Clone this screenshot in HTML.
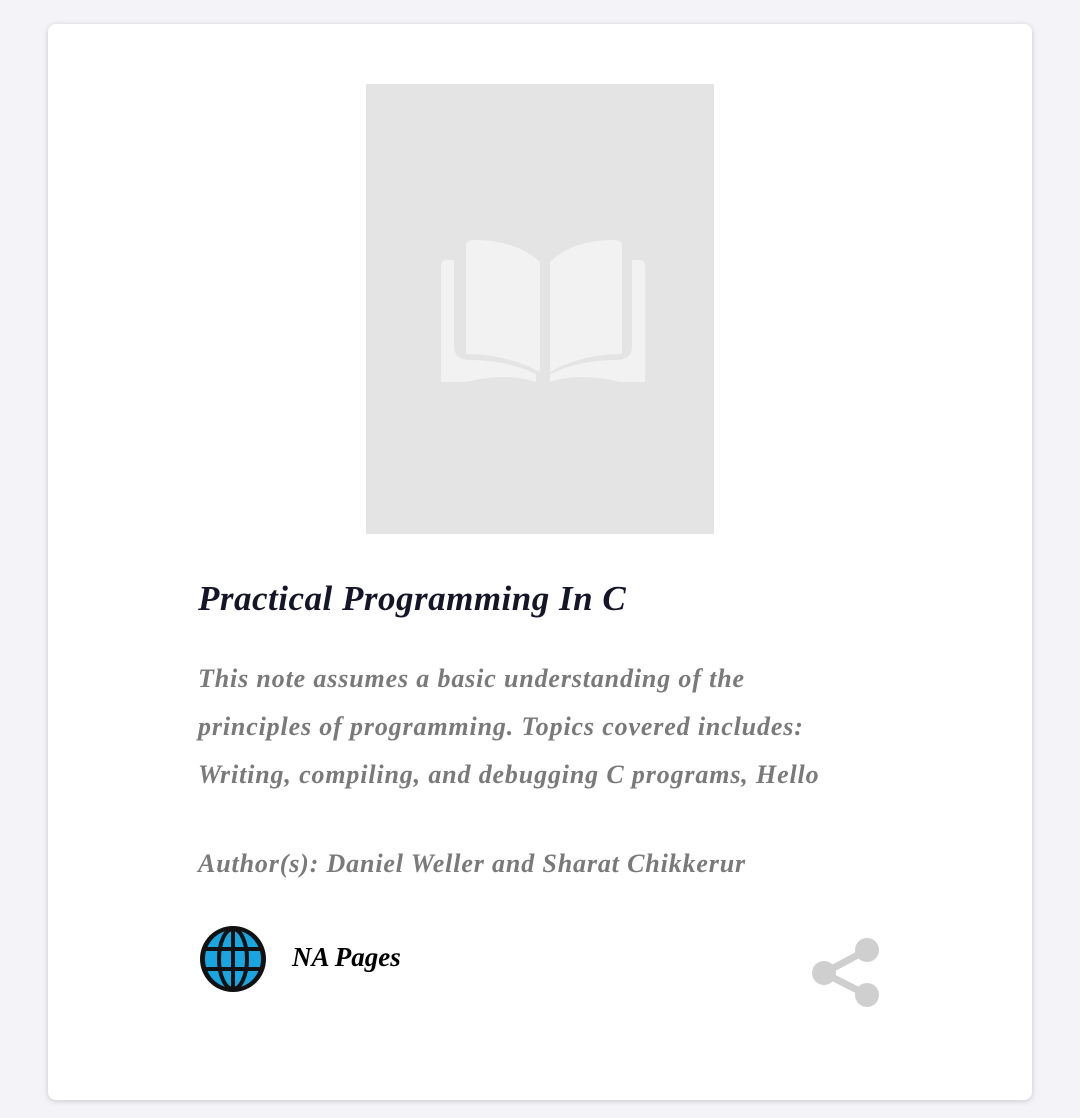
<!DOCTYPE html>
<html><head><style>
body{margin:0;background:#f4f4f8;width:1080px;height:1118px;position:relative;font-family:"Liberation Serif",serif;}
.card{position:absolute;left:48px;top:24px;width:984px;height:1076px;background:#fff;border-radius:8px;box-shadow:0 1px 6px rgba(0,0,0,.18);}
.img{position:absolute;left:366px;top:84px;width:348px;height:450px;background:#e4e4e4;}
.t{position:absolute;left:198px;font-style:italic;white-space:nowrap;}
</style></head><body>
<div class="card"></div>
<div class="img">
<svg width="348" height="450" viewBox="0 0 348 450">
<g fill="#f2f2f2">
<path d="M75 182 Q75 176 81 176 L88 176 L88 262 Q88 276 104 276 Q140 276 170 290 L170 298 Q140 288 100 298 L75 298 Z"/>
<path d="M279 182 Q279 176 273 176 L266 176 L266 262 Q266 276 250 276 Q214 276 184 290 L184 298 Q214 288 254 298 L279 298 Z"/>
<path d="M100 162 Q100 156 108 156 Q150 156 174 178 L174 288 Q140 270 100 270 Z"/>
<path d="M256 162 Q256 156 248 156 Q206 156 184 178 L184 288 Q216 270 256 270 Z"/>
</g></svg>
</div>
<div class="t" style="top:579px;font-size:35px;color:#15152a;font-weight:bold;letter-spacing:0.5px">Practical Programming In C</div>
<div class="t" style="top:655px;font-size:26px;line-height:48px;color:#7a7a7a;font-weight:bold;letter-spacing:0.85px">This note assumes a basic understanding of the<br>principles of programming. Topics covered includes:<br>Writing, compiling, and debugging C programs, Hello</div>
<div class="t" style="top:849px;font-size:26px;color:#7a7a7a;font-weight:bold;letter-spacing:0.85px">Author(s): Daniel Weller and Sharat Chikkerur</div>
<svg style="position:absolute;left:198px;top:924px" width="70" height="70" viewBox="0 0 70 70">
<circle cx="35" cy="35" r="33" fill="#111"/>
<ellipse cx="35" cy="35" rx="28" ry="29" fill="#19a6e0"/>
<g stroke="#111" stroke-width="4" fill="none">
<line x1="6" y1="25" x2="64" y2="25"/><line x1="6" y1="45" x2="64" y2="45"/>
<line x1="35" y1="4" x2="35" y2="66"/>
<ellipse cx="35" cy="35" rx="14" ry="30"/>
</g></svg>
<div class="t" style="left:292px;top:942px;font-size:27px;color:#000;font-weight:bold">NA Pages</div>
<svg style="position:absolute;left:808px;top:936px" width="74" height="74" viewBox="0 0 74 74">
<g fill="#cfcfcf"><circle cx="59" cy="14" r="12"/><circle cx="59" cy="59" r="12"/><circle cx="16" cy="37" r="12"/></g>
<g stroke="#cfcfcf" stroke-width="7"><line x1="16" y1="37" x2="59" y2="14"/><line x1="16" y1="37" x2="59" y2="59"/></g>
</svg>
</body></html>
